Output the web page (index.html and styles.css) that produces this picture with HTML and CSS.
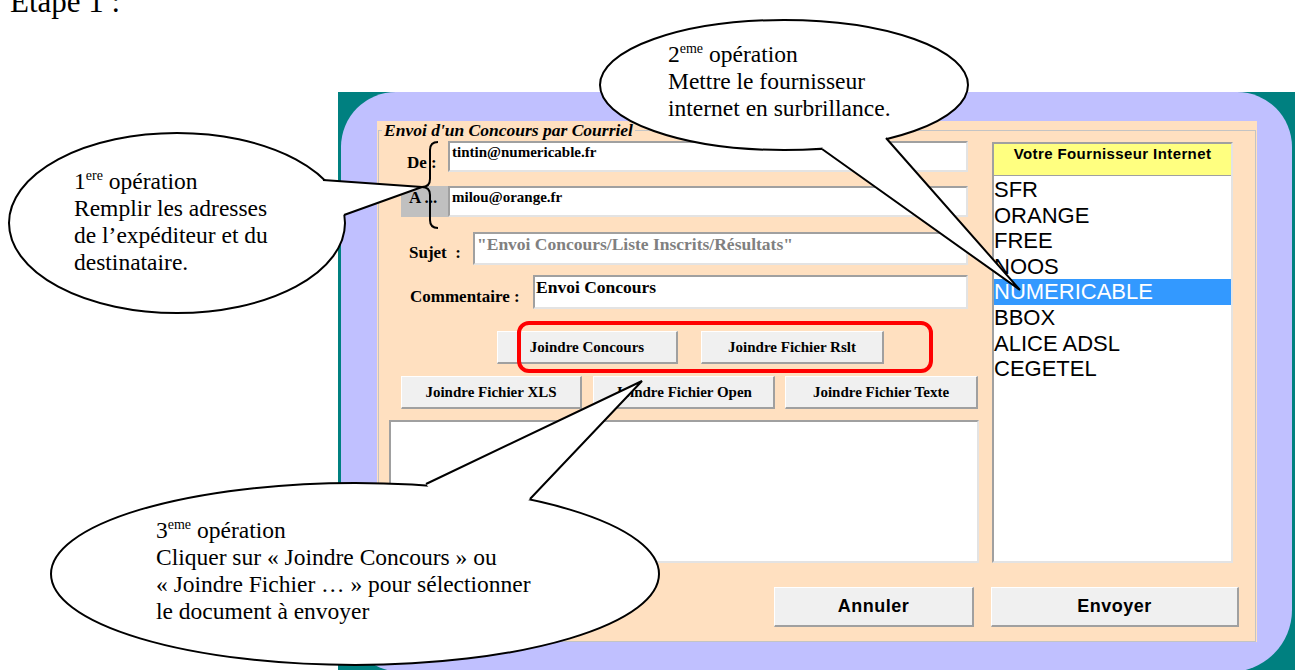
FILE: index.html
```html
<!DOCTYPE html>
<html lang="fr">
<head>
    <meta charset="UTF-8">
    <title>Envoi d'un Concours par Courriel</title>
    <link rel="stylesheet" href="styles.css">
</head>
<body>

<p class="step-title">Etape 1 :</p>

<div class="desk">
    <div class="frame">
        <div class="panel">
            <fieldset class="group">
                <legend>Envoi d'un Concours par Courriel</legend>
                <div class="group-body">

                    <div class="form-col">
                        <div class="field-row row-de">
                            <label class="lbl lbl-de">De :</label>
                            <div class="field small">tintin@numericable.fr</div>
                        </div>
                        <div class="field-row row-a">
                            <label class="lbl lbl-a">A ...</label>
                            <div class="field small">milou@orange.fr</div>
                        </div>
                        <div class="field-row row-sujet">
                            <label class="lbl lbl-sujet">Sujet&nbsp; :</label>
                            <div class="field large muted">"Envoi Concours/Liste Inscrits/Résultats"</div>
                        </div>
                        <div class="field-row row-comment">
                            <label class="lbl lbl-comment">Commentaire :</label>
                            <div class="field large">Envoi Concours</div>
                        </div>

                        <div class="btn-row row-join1">
                            <button class="btn w181">Joindre Concours</button>
                            <button class="btn w183">Joindre Fichier Rslt</button>
                        </div>
                        <div class="btn-row row-join2">
                            <button class="btn w181">Joindre Fichier XLS</button>
                            <button class="btn w182">Joindre Fichier Open</button>
                            <button class="btn w193">Joindre Fichier Texte</button>
                        </div>

                        <div class="memo"></div>
                    </div>

                    <div class="provider-list">
                        <div class="provider-head">Votre Fournisseur Internet</div>
                        <ul>
                            <li>SFR</li>
                            <li>ORANGE</li>
                            <li>FREE</li>
                            <li>NOOS</li>
                            <li class="selected">NUMERICABLE</li>
                            <li>BBOX</li>
                            <li>ALICE ADSL</li>
                            <li>CEGETEL</li>
                        </ul>
                    </div>

                    <div class="actions">
                        <button class="btn btn-big cancel">Annuler</button>
                        <button class="btn btn-big send">Envoyer</button>
                    </div>

                </div>
            </fieldset>
        </div>
    </div>
</div>

<div class="notes">
    <svg width="1295" height="670" viewBox="0 0 1295 670">
        <!-- highlight around the attach buttons -->
        <rect x="519" y="323" width="412" height="48" rx="10" fill="none" stroke="#ff0000" stroke-width="4"/>

        <!-- brace on the address fields -->
        <path d="M438 142 Q430 142 430 150 L430 179 Q430 187 422 187 Q430 187 430 195 L430 220 Q430 228 438 228"
              fill="none" stroke="#000" stroke-width="2"/>

        <!-- bubble 1 -->
        <ellipse cx="177" cy="223" rx="168" ry="90" fill="#fff" stroke="#000" stroke-width="2"/>
        <polygon points="323,180 422,187 344,215 250,210" fill="#fff"/>
        <polyline points="323,180 422,187 344,215" fill="none" stroke="#000" stroke-width="2"/>

        <!-- bubble 2 -->
        <ellipse cx="784" cy="85" rx="184" ry="65" fill="#fff" stroke="#000" stroke-width="2"/>
        <polygon points="822,149 1020,290 886,138 840,100" fill="#fff"/>
        <polyline points="822,149 1020,290 886,138" fill="none" stroke="#000" stroke-width="2"/>

        <!-- bubble 3 -->
        <ellipse cx="355" cy="574" rx="304" ry="91" fill="#fff" stroke="#000" stroke-width="2"/>
        <polygon points="426,484 642,381 530,499 470,540" fill="#fff"/>
        <polyline points="426,484 642,381 530,499" fill="none" stroke="#000" stroke-width="2"/>
    </svg>

    <div class="note note-1">
        1<sup>ere</sup> opération<br>
        Remplir les adresses<br>
        de l’expéditeur et du<br>
        destinataire.
    </div>
    <div class="note note-2">
        2<sup>eme</sup> opération<br>
        Mettre le fournisseur<br>
        internet en surbrillance.
    </div>
    <div class="note note-3">
        3<sup>eme</sup> opération<br>
        Cliquer sur « Joindre Concours » ou<br>
        « Joindre Fichier … » pour sélectionner<br>
        le document à envoyer
    </div>
</div>

</body>
</html>
```

FILE: styles.css
```css
body {
    margin: 0;
    width: 1295px;
    height: 670px;
    overflow: hidden;
    position: relative;
    background: #fff;
    font-family: "Liberation Serif", serif;
}
.step-title {
    margin: -14px 0 0 10px;
    height: 106px;
    font-size: 31px;
    line-height: 31px;
}

/* window */
.desk {
    margin-left: 338px;
    height: 578px;
    padding: 0 3px;
    background-color: #008080;
    overflow: hidden;
}
.frame {
    height: 580px;
    box-sizing: border-box;
    padding: 27px 35px 0 36px;
    background-color: #c0c0ff;
    border-radius: 55px 55px 62px 62px;
}
.panel {
    background-color: #ffe0c0;
}
.group {
    margin: 2px 1px 1px;
    padding: 0;
    min-width: 0;
    border: 1px solid #c4c4c4;
}
.group legend {
    margin-left: 3px;
    padding: 0 2px;
    font: italic bold 17.5px/18px "Liberation Serif", serif;
}
.group-body {
    display: grid;
    grid-template-columns: 590px 1fr;
    column-gap: 13px;
    padding: 2px 16px 14px 10px;
}

/* left column */
.form-col {
    display: flex;
    flex-direction: column;
}
.field-row {
    display: flex;
    padding-right: 11px;
}
.row-de { height: 31px; margin-bottom: 14px; }
.row-a { height: 31px; margin-bottom: 15px; }
.row-sujet { height: 33px; margin-bottom: 10px; }
.row-comment { height: 34px; margin-bottom: 22px; }

.lbl {
    flex: none;
    box-sizing: border-box;
    font: bold 17px/20px "Liberation Serif", serif;
    white-space: pre;
}
.lbl-de { width: 59px; padding: 12px 0 0 18px; }
.lbl-a {
    width: 47px;
    margin-left: 12px;
    padding: 2px 0 0 8px;
    background-color: #c0c0c0;
}
.lbl-sujet { width: 84px; padding: 11px 0 0 20px; }
.lbl-comment { width: 144px; padding: 12px 0 0 21px; }

.field {
    flex: 1;
    background: #fff;
    border: 2px solid;
    border-color: #a0a0a0 #e3e3e3 #e3e3e3 #a0a0a0;
    font-weight: bold;
    white-space: nowrap;
    overflow: hidden;
}
.field.small {
    font-size: 15px;
    line-height: 17px;
    padding: 1px 2px 0;
}
.field.large {
    font-size: 17.5px;
    line-height: 20px;
    padding: 0 1px;
}
.field.muted {
    color: #808080;
    padding-left: 2px;
}

.btn-row {
    display: flex;
    height: 33px;
}
.row-join1 { padding-left: 108px; gap: 23px; margin-bottom: 12px; }
.row-join2 { padding-left: 12px; gap: 11px; margin-bottom: 11px; }

.btn {
    box-sizing: border-box;
    height: 33px;
    padding: 0;
    background-color: #f0f0f0;
    border-style: solid;
    border-width: 1px 2px 2px 1px;
    border-color: #fff #a0a0a0 #a0a0a0 #fff;
    color: #000;
    font: bold 15px "Liberation Serif", serif;
}
.w181 { width: 181px; }
.w182 { width: 182px; }
.w183 { width: 183px; }
.w193 { width: 193px; margin-left: -1px; }

.memo {
    box-sizing: border-box;
    height: 143px;
    background: #fff;
    border: 2px solid;
    border-color: #a0a0a0 #e3e3e3 #e3e3e3 #a0a0a0;
}

/* provider list */
.provider-list {
    box-sizing: border-box;
    width: 241px;
    height: 421px;
    margin-top: 1px;
    background: #fff;
    border: 2px solid;
    border-color: #a0a0a0 #e3e3e3 #e3e3e3 #a0a0a0;
}
.provider-head {
    box-sizing: border-box;
    height: 32px;
    padding-top: 1px;
    background-color: #ffff80;
    border-bottom: 1px solid #a0a0a0;
    text-align: center;
    font: bold 15px/18px "Liberation Sans", sans-serif;
    letter-spacing: 0.4px;
}
.provider-list ul {
    list-style: none;
    margin: 0;
    padding: 1px 0 0;
}
.provider-list li {
    font: 22px/25.6px "Liberation Sans", sans-serif;
    padding-left: 0;
}
.provider-list li.selected {
    background-color: #3399ff;
    color: #fff;
}

/* bottom buttons */
.actions {
    grid-column: 1 / -1;
    display: flex;
    justify-content: flex-end;
    gap: 17px;
    margin-top: 24px;
}
.btn-big {
    height: 40px;
    font: bold 18px "Liberation Sans", sans-serif;
    letter-spacing: 0.5px;
}
.cancel { width: 200px; }
.send { width: 248px; }

/* callouts */
.notes {
    position: absolute;
    top: 0;
    left: 0;
    width: 1295px;
    height: 670px;
    pointer-events: none;
}
.notes svg {
    position: absolute;
    top: 0;
    left: 0;
}
.note {
    position: absolute;
    font: 23.5px/27px "Liberation Serif", serif;
    white-space: nowrap;
}
.note sup {
    font-size: 14px;
    line-height: 0;
    vertical-align: 9px;
}
.note-1 { left: 74px; top: 168px; }
.note-2 { left: 668px; top: 41px; }
.note-3 { left: 156px; top: 517px; }
```
